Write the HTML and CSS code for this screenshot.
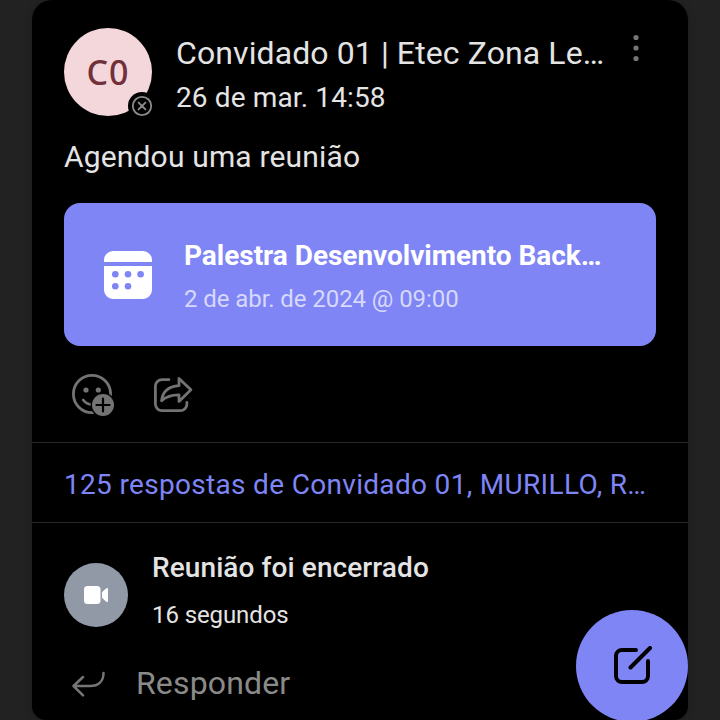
FILE: index.html
```html
<!DOCTYPE html>
<html lang="pt-BR">
<head>
<meta charset="utf-8">
<title>Publicações</title>
<link rel="stylesheet" href="styles.css">
</head>
<body>
<main class="card">
  <header class="post-header">
    <div class="avatar"><span class="initials">C0</span>
      <svg class="presence" viewBox="0 0 28 28"><circle cx="14" cy="14" r="14" fill="#000"/><circle cx="14" cy="14" r="9.2" fill="none" stroke="#8b8b8b" stroke-width="1.8"/><path d="M10.6 10.6l6.8 6.8M17.4 10.6l-6.8 6.8" stroke="#8b8b8b" stroke-width="1.9" stroke-linecap="round"/></svg>
    </div>
    <div class="author">
      <h1 class="name">Convidado 01 | Etec Zona Le…</h1>
      <p class="date">26 de mar. 14:58</p>
    </div>
    <svg class="more" viewBox="0 0 8 28"><circle cx="4" cy="3.5" r="2.6"/><circle cx="4" cy="14" r="2.6"/><circle cx="4" cy="24.5" r="2.6"/></svg>
  </header>
  <p class="message">Agendou uma reunião</p>
  <section class="meeting">
    <svg class="calendar" viewBox="0 0 48 48"><path d="M0 11V9a9 9 0 0 1 9-9h30a9 9 0 0 1 9 9v2zM0 15h48v24a9 9 0 0 1-9 9H9a9 9 0 0 1-9-9z" fill="#fff"/><g fill="#7f85f5"><circle cx="11.3" cy="23.3" r="3.3"/><circle cx="24" cy="23.3" r="3.3"/><circle cx="36.6" cy="23.3" r="3.3"/><circle cx="11.3" cy="35.3" r="3.3"/><circle cx="24" cy="35.3" r="3.3"/></g></svg>
    <div class="meeting-text">
      <h2 class="meeting-title">Palestra Desenvolvimento Back…</h2>
      <p class="meeting-date">2 de abr. de 2024 @ 09:00</p>
    </div>
  </section>
  <div class="actions">
    <svg class="react" viewBox="0 0 44 44"><circle cx="20" cy="20" r="18.6" fill="none" stroke="#737373" stroke-width="2.8"/><circle cx="14" cy="16" r="2.6" fill="#737373"/><circle cx="26.3" cy="16" r="2.6" fill="#737373"/><path d="M11.2 26q3.4 4.3 9 4.6" fill="none" stroke="#737373" stroke-width="2.8" stroke-linecap="round"/><circle cx="31" cy="31" r="12.4" fill="#000"/><circle cx="31" cy="31" r="11" fill="#737373"/><path d="M31 24.5v13M24.5 31h13" stroke="#000" stroke-width="2.2" stroke-linecap="round"/></svg>
    <svg class="share" viewBox="0 0 40 40" fill="none" stroke="#737373" stroke-width="2.8" stroke-linecap="round" stroke-linejoin="round"><path d="M15 5.6H8a6.6 6.6 0 0 0-6.6 6.6V30A6.6 6.6 0 0 0 8 36.6h18.3a6.6 6.6 0 0 0 6.6-6.6v-1.600"/><path d="M25 4.400v7.300C14.500 12.400 8.600 17.500 7.600 26.800 12.300 22.600 18 20.800 25 20.900v6.500l11.900-11.700z"/></svg>
  </div>
  <div class="replies">125 respostas de Convidado 01, MURILLO, R…</div>
  <section class="ended">
    <div class="camera"><svg viewBox="0 0 24 18" fill="#fff"><rect width="16.500" height="18" rx="3.500"/><path d="M18 6.300L22 2.600Q24 1.200 24 3v12q0 1.800-2 .400L18 11.700z"/></svg></div>
    <div>
      <h3 class="ended-title">Reunião foi encerrado</h3>
      <p class="duration">16 segundos</p>
    </div>
  </section>
  <div class="reply">
    <svg class="reply-icon" viewBox="0 0 34 28" fill="none" stroke="#757575" stroke-width="2.500" stroke-linecap="round" stroke-linejoin="round"><path d="M11 6L1.500 15l9.500 9.300M2 15h16c8.500 0 13.500-5 13.500-13"/></svg>
    <span class="reply-text">Responder</span>
  </div>
</main>
<button class="compose" aria-label="Nova publicação"><svg viewBox="0 0 40 40" fill="none" stroke="#000" stroke-width="4" stroke-linecap="round" stroke-linejoin="round"><path d="M24 4H10a6 6 0 0 0-6 6v20a6 6 0 0 0 6 6h20a6 6 0 0 0 6-6V15M18.500 21.500L38 2"/></svg></button>
</body>
</html>
```
FILE: styles.css
```css
* { box-sizing: border-box; }
html, body { height: 100%; overflow: hidden; }
body { margin: 0; background: #222; color: #e4e4e4; font-family: Roboto, sans-serif; }
h1, h2, h3, p { margin: 0; font-weight: 400; white-space: nowrap; }
svg { display: block; flex: none; }
.card { width: 656px; height: 720px; margin: 0 32px; background: #000; border-radius: 20px 20px 14px 14px; box-shadow: 0 1px 9px rgba(0,0,0,.22); overflow: hidden; }
.post-header { display: flex; height: 124px; padding: 28px 0 0 32px; }
.avatar { position: relative; flex: none; display: flex; align-items: center; justify-content: center; width: 88px; height: 88px; border-radius: 50%; background: #f4d7da; }
.initials { font: 500 34px/40px "Noto Sans", sans-serif; color: #71303a; letter-spacing: 1px; }
.presence { position: absolute; left: 64px; top: 64px; width: 28px; height: 28px; }
.author { width: 428px; margin-left: 24px; }
.name { margin-top: 3px; font-size: 32px; line-height: 44px; letter-spacing: .1px; }
.date { margin-top: 1px; font-size: 28px; line-height: 44px; letter-spacing: .13px; }
.more { width: 8px; height: 28px; margin: 6px 0 0 28px; fill: #757575; }
.message { height: 79px; padding: 12px 32px 0; font-size: 30px; line-height: 42px; letter-spacing: .16px; }
.meeting { display: flex; align-items: center; height: 143px; margin: 0 32px; padding-left: 40px; border-radius: 16px; background: #7f85f5; }
.calendar { width: 48px; height: 48px; }
.meeting-text { margin-left: 32px; padding-top: 4px; }
.meeting-title { color: #fff; font-size: 28px; font-weight: 700; line-height: 44px; letter-spacing: -.03px; }
.meeting-date { color: #d7d9fc; font-size: 24px; line-height: 42px; letter-spacing: -.08px; }
.actions { display: flex; height: 96px; padding: 28px 0 0 40px; }
.react { width: 44px; height: 44px; }
.share { width: 40px; height: 40px; margin-left: 38px; }
.replies { height: 81px; padding: 20px 32px 0; border: solid #292929; border-width: 1px 0; color: #7f85f5; font-size: 28px; line-height: 43px; white-space: nowrap; letter-spacing: .32px; }
.ended { display: flex; height: 123px; padding: 24px 32px 0; }
.camera { display: flex; align-items: center; justify-content: center; width: 64px; height: 64px; margin: 16px 24px 0 0; border-radius: 50%; background: #9299a6; }
.camera svg { width: 24px; height: 18px; }
.ended-title { font-size: 28px; font-weight: 500; line-height: 42px; letter-spacing: .09px; }
.duration { margin-top: 5px; font-size: 24px; line-height: 42px; letter-spacing: -.1px; }
.reply { display: flex; padding: 15px 0 0 40px; color: #8a8a8a; font-size: 32px; line-height: 44px; letter-spacing: .15px; }
.reply-icon { width: 34px; height: 28px; margin: 10px 30px 0 0; }
.compose { position: absolute; left: 576px; top: 610px; display: flex; align-items: center; justify-content: center; width: 112px; height: 112px; padding: 0; border: 0; border-radius: 50%; background: #7f85f5; }
.compose svg { width: 40px; height: 40px; }
```
